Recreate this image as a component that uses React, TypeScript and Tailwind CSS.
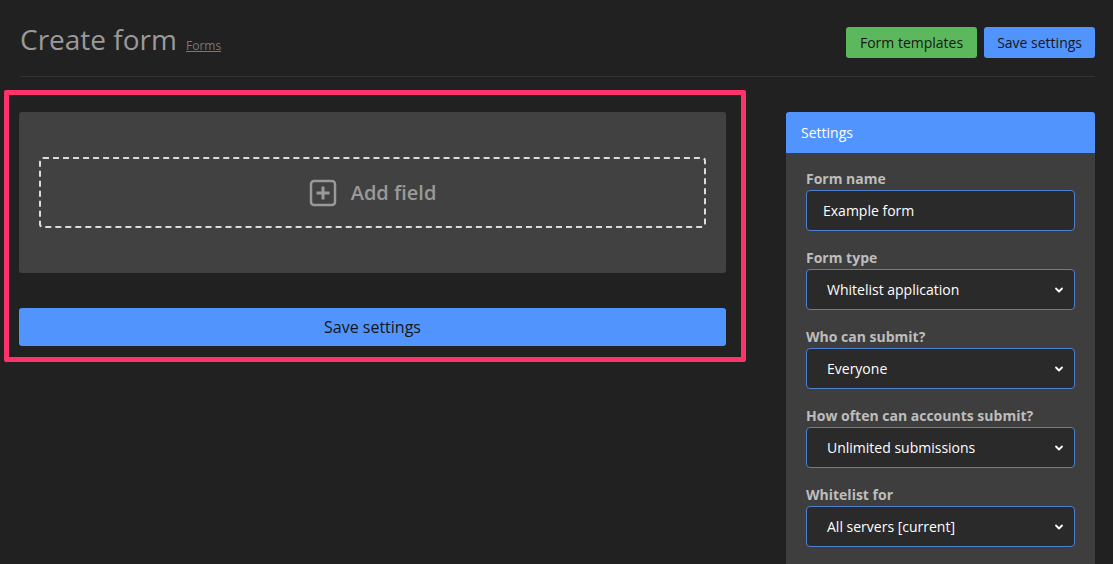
import React from "react";

function Chevron() {
  return (
    <svg width="10" height="10" viewBox="0 0 10 10" className="shrink-0">
      <path d="M2 3.5 L5 6.5 L8 3.5" fill="none" stroke="#ffffff" strokeWidth="1.8" strokeLinecap="round" strokeLinejoin="round" />
    </svg>
  );
}

function Field({ label, value, select }: { label: string; value: string; select?: boolean }) {
  return (
    <div className="flex flex-col">
      <label className="text-[14px] font-bold text-[#bdbdbd] leading-[19px] mb-[2px]">{label}</label>
      <div className={`h-[41px] rounded-[4px] border border-[#4f7fd0] bg-[#2a2a2a] flex items-center ${select ? "pl-[20px] pr-[10px]" : "pl-[16px] pr-[10px]"}`}>
        <span className="flex-1 text-[14px] text-white">{value}</span>
        {select && <Chevron />}
      </div>
    </div>
  );
}

export default function App() {
  return (
    <div className="min-h-[564px] w-full bg-[#212121] overflow-hidden" style={{ fontFamily: '"Open Sans", sans-serif' }}>
      <div className="pl-[20px] pr-[18px] pt-[22px]">
        <div className="flex items-end justify-between pb-[16px] border-b border-[#333333]">
          <div className="flex items-baseline gap-[9px] mb-[3px]">
            <h1 className="text-[28px] leading-[35px] text-[#9a9a9a]">Create form</h1>
            <a className="text-[12px] text-[#777777] underline">Forms</a>
          </div>
          <div className="flex gap-[7px] mb-[2px]">
            <button className="h-[31px] px-[14px] rounded-[3px] bg-[#5cb85c] text-[14px] text-[#161616]">Form templates</button>
            <button className="h-[31px] px-[13px] rounded-[3px] bg-[#5294fd] text-[14px] text-[#161616]">Save settings</button>
          </div>
        </div>
      </div>
      <div className="flex items-start pt-[13px] pr-[18px]">
        <div className="ml-[4px] w-[742px] border-[5px] border-[#ff336b] rounded-[2px] pl-[10px] pr-[15px] pt-[17px] pb-[11px]">
          <div className="h-[161px] rounded-[3px] bg-[#414141] flex items-center px-[20px]">
            <div className="w-full h-[71px] border-2 border-dashed border-[#dcdcdc] rounded-[4px] flex items-center justify-center gap-[14px]">
              <svg width="28" height="28" viewBox="0 0 28 28">
                <rect x="2" y="2" width="24" height="24" rx="3" fill="none" stroke="#999999" strokeWidth="2.5" />
                <path d="M14 7.5 V20.5 M7.5 14 H20.5" stroke="#999999" strokeWidth="3" />
              </svg>
              <span className="text-[20px] font-semibold text-[#999999]">Add field</span>
            </div>
          </div>
          <button className="mt-[35px] w-full h-[38px] rounded-[3px] bg-[#5294fd] text-[16px] text-[#161616]">Save settings</button>
        </div>
        <div className="ml-[40px] flex-1">
          <div className="mt-[22px] rounded-[3px] overflow-hidden">
            <div className="h-[41px] bg-[#5294fd] px-[15px] flex items-center text-[14px] text-white">Settings</div>
            <div className="bg-[#3e3e3e] px-[20px] pt-[16px] pb-[20px] flex flex-col gap-[17px]">
              <Field label="Form name" value="Example form" />
              <Field label="Form type" value="Whitelist application" select />
              <Field label="Who can submit?" value="Everyone" select />
              <Field label="How often can accounts submit?" value="Unlimited submissions" select />
              <Field label="Whitelist for" value="All servers [current]" select />
            </div>
          </div>
        </div>
      </div>
    </div>
  );
}
